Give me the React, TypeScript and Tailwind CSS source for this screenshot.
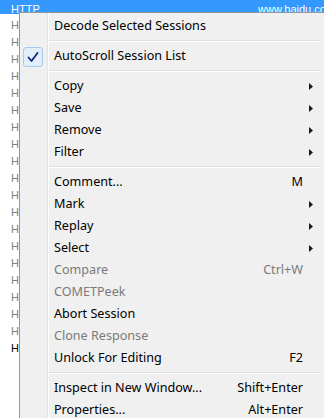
import React from "react";

type Item =
  | { kind: "sep" }
  | {
      kind: "item";
      label: string;
      shortcut?: string;
      sub?: boolean;
      disabled?: boolean;
      checked?: boolean;
    };

const items: Item[] = [
  { kind: "item", label: "Decode Selected Sessions" },
  { kind: "sep" },
  { kind: "item", label: "AutoScroll Session List", checked: true },
  { kind: "sep" },
  { kind: "item", label: "Copy", sub: true },
  { kind: "item", label: "Save", sub: true },
  { kind: "item", label: "Remove", sub: true },
  { kind: "item", label: "Filter", sub: true },
  { kind: "sep" },
  { kind: "item", label: "Comment...", shortcut: "M" },
  { kind: "item", label: "Mark", sub: true },
  { kind: "item", label: "Replay", sub: true },
  { kind: "item", label: "Select", sub: true },
  { kind: "item", label: "Compare", shortcut: "Ctrl+W", disabled: true },
  { kind: "item", label: "COMETPeek", disabled: true },
  { kind: "item", label: "Abort Session" },
  { kind: "item", label: "Clone Response", disabled: true },
  { kind: "item", label: "Unlock For Editing", shortcut: "F2" },
  { kind: "sep" },
  { kind: "item", label: "Inspect in New Window...", shortcut: "Shift+Enter" },
  { kind: "item", label: "Properties...", shortcut: "Alt+Enter" },
];

function Arrow() {
  return (
    <svg width="4" height="7" viewBox="0 0 4 7" className="ml-[6px]">
      <path d="M0 0 L4 3.5 L0 7 Z" fill="#1a1a1a" />
    </svg>
  );
}

function Check() {
  return (
    <div className="absolute left-[1px] top-[2px] w-[20px] h-[20px] rounded-[3px] border border-[#a8c8ee] bg-[#e3eefb] flex items-center justify-center">
      <svg width="12" height="11" viewBox="0 0 12 11">
        <path
          d="M1.5 5.5 L4.5 9 L10.5 1"
          stroke="#0b2a7a"
          strokeWidth="1.8"
          fill="none"
          strokeLinecap="round"
          strokeLinejoin="round"
        />
      </svg>
    </div>
  );
}

export default function App() {
  const rows = Array.from({ length: 20 });
  return (
    <div
      className="relative w-[324px] h-[418px] overflow-hidden bg-white"
      style={{ fontFamily: "'Liberation Sans', Arial, sans-serif" }}
    >
      {/* session list behind */}
      <div className="flex flex-col text-[11px]">
        <div className="h-[14px] bg-[#3399ff] text-white flex items-end justify-between overflow-hidden">
          <span className="pl-[11px] leading-[11px] translate-y-[1px]">HTTP</span>
          <span className="leading-[11px] w-[66px] whitespace-nowrap overflow-hidden translate-y-[1px]">
            www.baidu.com
          </span>
        </div>
        {rows.map((_, i) => (
          <div
            key={i}
            className={`h-[17px] flex items-end pl-[11px] leading-[11px] ${
              i === 19 ? "text-black" : "text-[#808080]"
            }`}
          >
            HTTP
          </div>
        ))}
      </div>

      {/* context menu */}
      <div
        className="absolute left-[19px] top-[12px] w-[307px] border border-[#979797] bg-[#f0f0f0] p-[2px] text-[12.6px] text-black"
        style={{ fontFamily: "'Noto Sans', 'Open Sans', sans-serif" }}
      >
        <div className="absolute left-[27px] top-0 bottom-0 w-[1px] bg-[#e2e3e3]" />
        <div className="absolute left-[28px] top-0 bottom-0 w-[1px] bg-white" />
        {items.map((it, i) =>
          it.kind === "sep" ? (
            <div key={i} className="h-[8px] flex flex-col justify-center pl-[26px] pr-[2px]">
              <div className="h-[1px] bg-[#e0e0e0]" />
              <div className="h-[1px] bg-white" />
            </div>
          ) : (
            <div
              key={i}
              className={`relative h-[22px] flex items-center pl-[32px] ${
                it.disabled ? "text-[#7a7a7a]" : "text-black"
              }`}
            >
              {it.checked && <Check />}
              <span className="flex-1 whitespace-nowrap leading-[16px]">{it.label}</span>
              {it.shortcut && <span className="whitespace-nowrap leading-[16px]">{it.shortcut}</span>}
              <span className="w-[20px] flex items-center">{it.sub && <Arrow />}</span>
            </div>
          )
        )}
      </div>
    </div>
  );
}
